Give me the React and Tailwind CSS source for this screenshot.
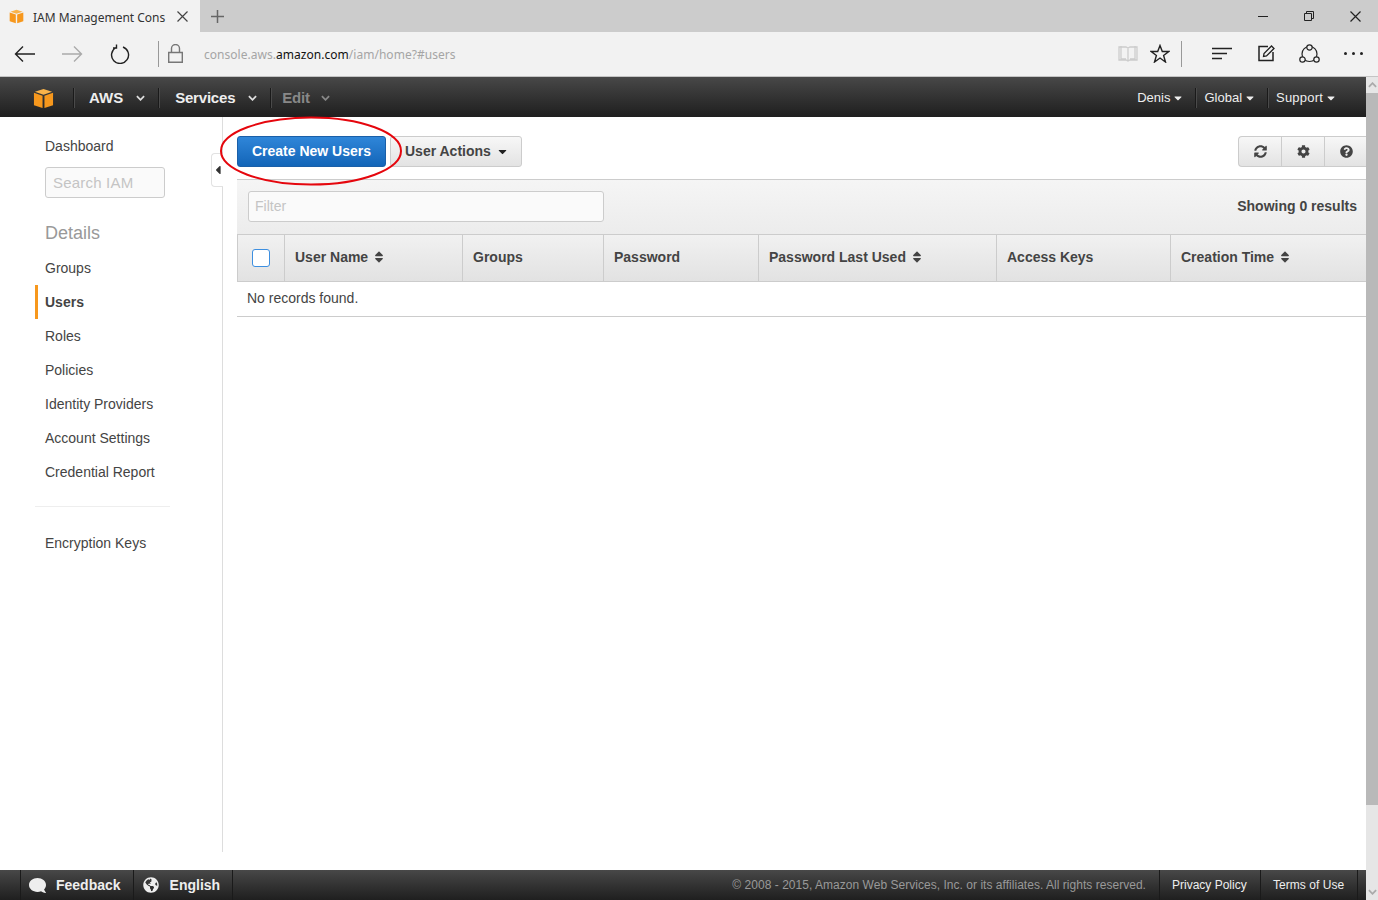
import { FaSyncAlt, FaCog, FaQuestionCircle, FaSort, FaComment, FaGlobeAmericas, FaCaretDown, FaCaretLeft } from "react-icons/fa";

const Cube = ({ className }) => (
  <svg viewBox="0 0 22 22" className={className}>
    <path d="M11 1 L20 4 L11 7 L2 4 Z" fill="#f9b34a" />
    <path d="M1 5 L10 8 V21 L1 18 Z" fill="#f7981d" />
    <path d="M21 5 L12 8 V21 L21 18 Z" fill="#f7981d" />
  </svg>
);

const Chevron = ({ className = "" }) => (
  <svg viewBox="0 0 10 6" className={`w-[9px] h-[6px] ${className}`} fill="none" stroke="currentColor" strokeWidth="2">
    <path d="M1 1 L5 5 L9 1" />
  </svg>
);

const ChromeIcon = ({ children, className = "", w = 24, h = 24 }) => (
  <svg width={w} height={h} viewBox={`0 0 ${w} ${h}`} fill="none" stroke="currentColor" strokeWidth="1.2" className={className}>
    {children}
  </svg>
);

const TabBar = () => (
  <div className="h-8 bg-[#cccccc] flex items-stretch text-[#333]">
    <div className="w-[200px] bg-[#f2f2f2] flex items-center pl-[9px]">
      <Cube className="w-[15px] h-[15px]" />
      <span className="ml-[9px] w-[144px] text-[12px] tracking-[-0.02px] whitespace-nowrap font-['Noto_Sans',sans-serif] leading-none mt-[3px]">IAM Management Cons</span>
      <ChromeIcon w={11} h={11} className="text-[#444]">
        <path d="M.5 .5 L10.5 10.5 M10.5 .5 L.5 10.5" />
      </ChromeIcon>
    </div>
    <div className="w-[34px] flex items-center justify-center text-[#666]">
      <ChromeIcon w={13} h={13}>
        <path d="M6.5 0 V13 M0 6.5 H13" strokeWidth="1.5" />
      </ChromeIcon>
    </div>
    <div className="flex-1" />
    <div className="flex items-center">
      <div className="w-[46px] flex justify-center">
        <div className="w-[10px] h-px bg-[#222]" />
      </div>
      <div className="w-[46px] flex justify-center">
        <ChromeIcon w={10} h={10} className="text-[#222]">
          <path d="M.5 2.5 H7.5 V9.5 H.5 Z M2.5 2.5 V.5 H9.5 V7.5 H7.5" strokeWidth="1" />
        </ChromeIcon>
      </div>
      <div className="w-[46px] flex justify-center">
        <ChromeIcon w={11} h={11} className="text-[#222]">
          <path d="M.5 .5 L10.5 10.5 M10.5 .5 L.5 10.5" />
        </ChromeIcon>
      </div>
    </div>
  </div>
);

const AddressBar = () => (
  <div className="h-[45px] pb-px bg-[#f2f2f2] border-b border-[#c4c4c4] flex items-center text-[#222]">
    <ChromeIcon w={22} h={18} className="ml-[14px]">
      <path d="M21 9 H1.5 M9 1.5 L1.5 9 L9 16.5" strokeWidth="1.4" />
    </ChromeIcon>
    <ChromeIcon w={22} h={18} className="ml-[25px] text-[#aaa]">
      <path d="M1 9 H20.5 M13 1.5 L20.5 9 L13 16.5" strokeWidth="1.4" />
    </ChromeIcon>
    <ChromeIcon w={20} h={20} className="ml-[27px]">
      <path d="M6 3.5 A8.5 8.5 0 1 0 13 3 M6.5 0.5 V4 H3" strokeWidth="1.4" />
    </ChromeIcon>
    <div className="w-px h-[26px] bg-[#999] ml-[28px]" />
    <ChromeIcon w={15} h={19} className="ml-[9px] text-[#777]">
      <path d="M.7 8.5 H14.3 V18.3 H.7 Z M3.5 8.5 V4.5 A4 4 0 0 1 11.5 4.5 V8.5" strokeWidth="1.4" />
    </ChromeIcon>
    <div className="ml-[21px] mt-[2px] text-[12px] tracking-[0.03px] text-[#a5a5a5] font-['Noto_Sans',sans-serif] whitespace-nowrap">
      console.aws.<span className="text-[#111]">amazon.com</span>/iam/home?#users
    </div>
    <div className="flex-1" />
    <ChromeIcon w={20} h={18} className="text-[#ccc]">
      <path d="M1 2 H8 L10 3 L12 2 H19 V15 H12 L10 16 L8 15 H1 Z M10 3 V16 M3 1 V14 H8 M17 1 V14 H12" strokeWidth="1.3" />
    </ChromeIcon>
    <ChromeIcon w={20} h={19} className="ml-[12px]">
      <path d="M10 1.5 L12.3 7.5 H18.8 L13.6 11.4 L15.5 18 L10 14 L4.5 18 L6.4 11.4 L1.2 7.5 H7.7 Z" strokeWidth="1.4" />
    </ChromeIcon>
    <div className="w-px h-[26px] bg-[#999] ml-[11px]" />
    <ChromeIcon w={20} h={14} className="ml-[30px]">
      <path d="M0 1.5 H20 M0 6.5 H15 M0 11.5 H10" strokeWidth="1.4" />
    </ChromeIcon>
    <ChromeIcon w={17} h={17} className="ml-[26px]">
      <path d="M15 7 V15.5 H1 V1.5 H10" strokeWidth="1.5" />
      <path d="M5.5 11.5 L6 8.5 L13.5 1 L16 3.5 L8.5 11 Z" strokeWidth="1.3" />
    </ChromeIcon>
    <ChromeIcon w={21} h={20} className="ml-[24px]">
      <circle cx="10.5" cy="10" r="7.5" strokeWidth="1.2" />
      <circle cx="10.5" cy="3.5" r="2.7" fill="#f2f2f2" strokeWidth="1.2" />
      <circle cx="3.5" cy="15.5" r="2.7" fill="#f2f2f2" strokeWidth="1.2" />
      <circle cx="17.5" cy="15.5" r="2.7" fill="#f2f2f2" strokeWidth="1.2" />
    </ChromeIcon>
    <div className="ml-[24px] mr-[15px] flex gap-[5px]">
      <div className="w-[3px] h-[3px] rounded-full bg-[#222]" />
      <div className="w-[3px] h-[3px] rounded-full bg-[#222]" />
      <div className="w-[3px] h-[3px] rounded-full bg-[#222]" />
    </div>
  </div>
);

const NavSep = () => <div className="w-px h-5 bg-[#1a1a1a] border-r border-[#4a4a4a] box-content" />;

const TopNav = () => (
  <div className="h-10 pt-[2px] bg-gradient-to-b from-[#484848] to-[#1f1f1f] flex items-center text-white font-bold text-[15px]">
    <Cube className="w-[21px] h-[21px] ml-[33px]" />
    <div className="ml-[19px]"><NavSep /></div>
    <span className="ml-[14px] text-[#eee]">AWS</span>
    <Chevron className="ml-[13px] text-[#ddd]" />
    <div className="ml-[13px]"><NavSep /></div>
    <span className="ml-[15px] tracking-[-0.2px] text-[#eee]">Services</span>
    <Chevron className="ml-[13px] text-[#ddd]" />
    <div className="ml-[13px]"><NavSep /></div>
    <span className="ml-[10px] tracking-[-0.2px] text-[#888]">Edit</span>
    <Chevron className="ml-[11px] text-[#888]" />
    <div className="flex-1" />
    <div className="flex items-center font-normal text-[13px] text-[#eee]">
      <span>Denis</span>
      <FaCaretDown className="ml-[2px] w-3 h-3" />
      <div className="ml-[11px]"><NavSep /></div>
      <span className="ml-[7px]">Global</span>
      <FaCaretDown className="ml-[2px] w-3 h-3" />
      <div className="ml-[11px]"><NavSep /></div>
      <span className="ml-[7px] tracking-[0.2px]">Support</span>
      <FaCaretDown className="ml-[2px] w-3 h-3 mr-[29px]" />
    </div>
  </div>
);

const sideLinks = ["Groups", "Users", "Roles", "Policies", "Identity Providers", "Account Settings", "Credential Report"];

const Sidebar = () => (
  <aside className="w-[223px] shrink-0 border-r border-[#ddd] relative pt-[19px] text-[14px] text-[#444]">
    <div className="pl-[45px] leading-5">Dashboard</div>
    <div className="ml-[45px] mt-[11px] w-[120px] h-[31px] border border-[#ccc] rounded-[3px] bg-[#fafafa] pl-[7px] pt-px flex items-center text-[15px] tracking-[0.2px] text-[#c4c4c4]">Search IAM</div>
    <div className="pl-[45px] mt-[23px] text-[18px] leading-6 text-[#999]">Details</div>
    <ul className="mt-[6px] ml-[35px]">
      {sideLinks.map((l) => (
        <li key={l} className={`h-[34px] flex items-center border-l-[3px] pl-[7px] ${l === "Users" ? "border-[#f7981d] font-bold" : "border-transparent"}`}>{l}</li>
      ))}
    </ul>
    <div className="ml-[35px] mt-[17px] w-[135px] border-t border-[#eee]" />
    <div className="pl-[45px] mt-[26px] leading-5">Encryption Keys</div>
    <div className="absolute right-[-1px] top-[36px] w-3 h-[34px] bg-white border border-r-0 border-[#e2e2e2] rounded-l-[4px] flex items-center justify-center text-[#333]">
      <FaCaretLeft className="w-[14px] h-[14px] shrink-0" />
    </div>
  </aside>
);

const columns = [
  { name: "User Name", w: "w-[178px]", sort: true },
  { name: "Groups", w: "w-[141px]" },
  { name: "Password", w: "w-[155px]" },
  { name: "Password Last Used", w: "w-[238px]", sort: true },
  { name: "Access Keys", w: "w-[174px]" },
  { name: "Creation Time", w: "flex-1", sort: true },
];

const Content = () => (
  <main className="flex-1 min-w-0 pl-[14px] pt-[19px] text-[14px] text-[#444]">
    <div className="flex items-start h-[43px]">
      <button className="w-[149px] h-[31px] rounded-[3px] border border-[#1a5fa8] bg-gradient-to-b from-[#2f86d9] to-[#1265b8] text-white font-bold">Create New Users</button>
      <button className="ml-[4px] w-[132px] h-[31px] rounded-[3px] border border-[#ccc] bg-gradient-to-b from-[#f7f7f7] to-[#e3e3e3] font-bold flex items-center pl-[14px]">
        User Actions
        <FaCaretDown className="ml-[5px] w-[13px] h-[13px] text-[#222]" />
      </button>
      <div className="flex-1" />
      <div className="flex h-[31px] border border-r-0 border-[#ccc] rounded-l-[4px] bg-gradient-to-b from-[#f7f7f7] to-[#e3e3e3] text-[#444]">
        <div className="w-[43px] border-r border-[#ccc] flex items-center justify-center"><FaSyncAlt className="w-[13px] h-[13px]" /></div>
        <div className="w-[43px] border-r border-[#ccc] flex items-center justify-center"><FaCog className="w-[13px] h-[13px]" /></div>
        <div className="w-[41px] pl-px flex items-center justify-center"><FaQuestionCircle className="w-[13px] h-[13px]" /></div>
      </div>
    </div>
    <div className="border-y border-[#ccc] bg-gradient-to-b from-[#f5f5f5] to-[#ececec] h-[56px] flex items-center pl-[11px] pr-[9px] pb-[2px]">
      <div className="w-[356px] h-[31px] border border-[#ccc] rounded-[3px] bg-[#fafafa] pl-[6px] flex items-center text-[#c4c4c4]">Filter</div>
      <div className="flex-1" />
      <span className="font-bold">Showing 0 results</span>
    </div>
    <div className="h-[47px] border-b border-[#ccc] bg-gradient-to-b from-[#f1f1f1] to-[#e2e2e2] flex font-bold">
      <div className="w-[48px] border-r border-[#ccc] border-l flex items-center justify-center">
        <div className="w-[18px] h-[18px] rounded-[3px] border border-[#3d8fe0] bg-white" />
      </div>
      {columns.map((c) => (
        <div key={c.name} className={`${c.w} ${c.w === "flex-1" ? "" : "border-r"} border-[#ccc] flex items-center pl-[10px] pb-[2px]`}>
          {c.name}
          {c.sort && <FaSort className="ml-[4px] w-[14px] h-[14px] text-[#444]" />}
        </div>
      ))}
    </div>
    <div className="h-[35px] border-b border-[#ccc] pl-[10px] pb-[2px] flex items-center">No records found.</div>
  </main>
);

const Footer = () => (
  <div className="h-[30px] bg-gradient-to-b from-[#484848] to-[#1f1f1f] flex items-center text-[#eee]">
    <div className="ml-5 h-full border-l border-[#1a1a1a] pl-2 pr-3 flex items-center font-bold text-[14px] border-r">
      <FaComment className="w-[17px] h-[17px] -scale-x-100" />
      <span className="ml-[10px]">Feedback</span>
    </div>
    <div className="h-full pl-[9px] pr-[12px] flex items-center font-bold text-[14px] border-r border-[#1a1a1a]">
      <FaGlobeAmericas className="w-4 h-4" />
      <span className="ml-[11px]">English</span>
    </div>
    <div className="flex-1" />
    <span className="text-[12px] tracking-[0.03px] text-[#999]">© 2008 - 2015, Amazon Web Services, Inc. or its affiliates. All rights reserved.</span>
    <div className="ml-[13px] w-[101px] h-full border-l border-[#1a1a1a] pl-[12px] flex items-center text-[12px]">Privacy Policy</div>
    <div className="w-[98px] h-full border-x border-[#1a1a1a] pl-[12px] flex items-center text-[12px] tracking-[0.05px] mr-[8px]">Terms of Use</div>
  </div>
);

const Scrollbar = () => (
  <div className="w-3 shrink-0 bg-[#e6e6e6] flex flex-col">
    <div className="h-[16px] flex items-center justify-center text-[#aaa]"><Chevron className="rotate-180 w-2" /></div>
    <div className="h-[712px] bg-[#b9b9b9]" />
    <div className="flex-1" />
    <div className="h-[17px] flex items-center justify-center text-[#aaa]"><Chevron className="w-2" /></div>
  </div>
);

export default function App() {
  return (
    <div className="w-[1378px] h-[900px] overflow-hidden flex flex-col bg-white font-['Liberation_Sans',Arial,sans-serif] relative">
      <TabBar />
      <AddressBar />
      <div className="flex-1 flex min-h-0">
        <div className="flex-1 min-w-0 flex flex-col">
          <TopNav />
          <div className="flex flex-1 min-h-0 pb-[18px]">
            <Sidebar />
            <Content />
          </div>
          <Footer />
        </div>
        <Scrollbar />
      </div>
      {/* hand-drawn annotation over the button */}
      <svg className="absolute left-[218px] top-[115px]" width="186" height="72" fill="none">
        <ellipse cx="93" cy="36" rx="90" ry="33.5" stroke="#e5060d" strokeWidth="2" />
      </svg>
    </div>
  );
}
